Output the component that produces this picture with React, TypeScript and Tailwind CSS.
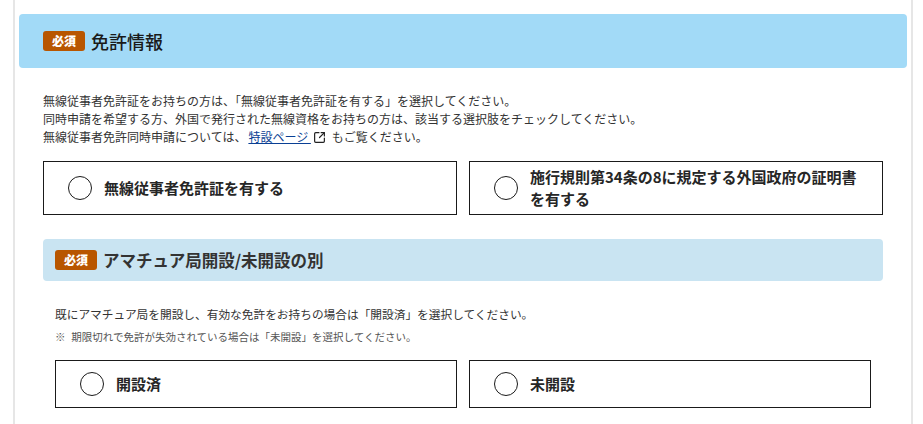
import { SquareArrowOutUpRight } from "lucide-react";
import type { ReactNode } from "react";

function RequiredBadge() {
  return (
    <span className="flex h-5 w-[42px] shrink-0 items-center justify-center rounded-[3px] bg-[#b85600] text-[12px] font-black leading-none text-white">
      必須
    </span>
  );
}

function RadioOption({ children }: { children: ReactNode }) {
  return (
    <label className="flex h-full items-center gap-3 border border-[#1a1a1a] bg-white pl-6">
      <span className="h-6 w-6 shrink-0 rounded-full border border-[#1a1a1a] bg-white" />
      <span className="pr-6 text-[15px] font-bold leading-[22px] text-[#262626]">{children}</span>
    </label>
  );
}

export default function App() {
  return (
    <div className="h-[424px] overflow-hidden bg-white pl-[13px] pr-[10px] font-['Noto_Sans_CJK_JP','Noto_Sans',sans-serif] text-[#333]">
      <div className="h-full border-x-2 border-[#e6e6e6] px-1 pt-[14px]">
        <div className="flex h-[54px] items-center gap-[6px] rounded-[4px] bg-[#a2daf7] pl-6">
          <RequiredBadge />
          <h2 className="text-[18px] font-medium leading-none text-[#1a1a1a]">免許情報</h2>
        </div>

        <div className="px-6 pt-[24px]">
          <p className="text-[12px] leading-[18px]">
            無線従事者免許証をお持ちの方は、「無線従事者免許証を有する」を選択してください。
            <br />
            同時申請を希望する方、外国で発行された無線資格をお持ちの方は、該当する選択肢をチェックしてください。
            <br />
            無線従事者免許同時申請については、
            <a className="ml-[2px] text-[#0a3f94] underline">特設ページ&nbsp;</a>
            <SquareArrowOutUpRight className="mr-[6px] ml-[2px] inline h-[13px] w-[13px] align-[-2px] text-[#222]" strokeWidth={2.2} />
            もご覧ください。
          </p>

          <div className="mt-[15px] grid h-[54px] grid-cols-2 gap-3">
            <RadioOption>無線従事者免許証を有する</RadioOption>
            <RadioOption>施行規則第34条の8に規定する外国政府の証明書を有する</RadioOption>
          </div>

          <div className="mt-6 flex h-[42px] items-center gap-[6px] rounded-[4px] bg-[#c9e4f2] pl-3">
            <RequiredBadge />
            <h3 className="text-[16.5px] font-bold leading-none text-[#333]">アマチュア局開設/未開設の別</h3>
          </div>

          <div className="px-3 pt-[24px]">
            <p className="text-[11.7px] leading-[18px]">既にアマチュア局を開設し、有効な免許をお持ちの場合は「開設済」を選択してください。</p>
            <p className="mt-[6px] text-[10.5px] leading-[15px] text-[#555]">※&nbsp;&nbsp;<span className="ml-px">期限切れで免許が失効されている場合は「未開設」を選択してください。</span></p>
            <div className="mt-4 grid h-[48px] grid-cols-2 gap-3">
              <RadioOption>開設済</RadioOption>
              <RadioOption>未開設</RadioOption>
            </div>
          </div>
        </div>
      </div>
    </div>
  );
}
